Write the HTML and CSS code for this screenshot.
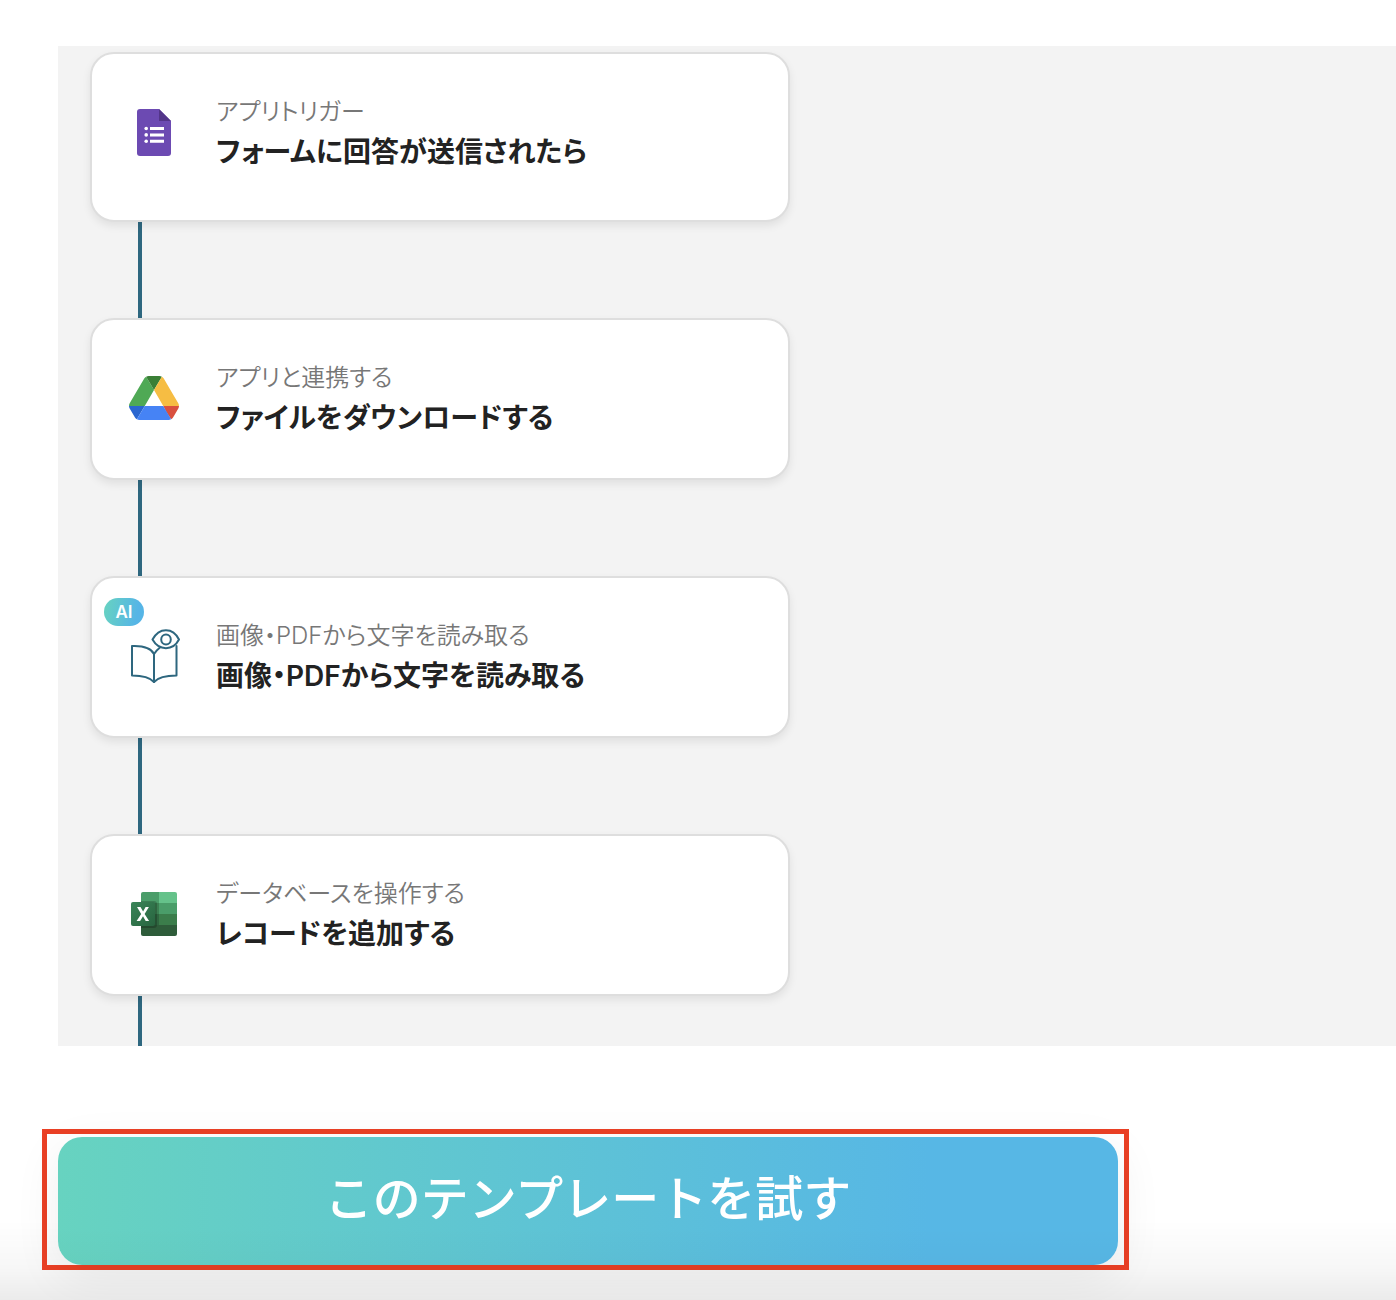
FILE: index.html
```html
<!DOCTYPE html>
<html lang="ja">
<head>
  <meta charset="UTF-8">
  <meta name="viewport" content="width=device-width, initial-scale=1.0">
  <title>テンプレート</title>
  <link rel="stylesheet" href="styles.css">
</head>
<body>
  <main class="page">
    <section class="flow">
      <article class="card card-trigger">
        <div class="card-icon">
          <svg width="34" height="47" viewBox="0 0 34 47" aria-hidden="true">
            <path fill="#6c4ab2" d="M3 0h19l12 12v32a3 3 0 0 1-3 3H3a3 3 0 0 1-3-3V3a3 3 0 0 1 3-3z"/>
            <path fill="#533589" d="M22 0l12 12H22z"/>
            <path fill="#fff" d="M13 18h14v3H13zM13 24.4h14v3H13zM13 30.8h14v3H13z"/>
            <circle fill="#fff" cx="9.2" cy="19.5" r="1.8"/>
            <circle fill="#fff" cx="9.2" cy="25.9" r="1.8"/>
            <circle fill="#fff" cx="9.2" cy="32.3" r="1.8"/>
          </svg>
        </div>
        <div class="card-text">
          <p class="card-type">アプリトリガー</p>
          <h2 class="card-title">フォームに回答が送信されたら</h2>
        </div>
      </article>
      <div class="connector"></div>

      <article class="card">
        <div class="card-icon">
          <svg width="50" height="44" viewBox="0 0 87.3 78" preserveAspectRatio="none" aria-hidden="true">
            <path fill="#2a66d0" d="M6.6 66.85l3.85 6.65c.8 1.4 1.95 2.5 3.3 3.3L27.5 53H0c0 1.55.4 3.1 1.2 4.5z"/>
            <path fill="#4fa955" d="M43.65 25L29.9 1.2c-1.35.8-2.5 1.9-3.3 3.3L1.2 48.5C.4 49.9 0 51.45 0 53h27.5z"/>
            <path fill="#d9503f" d="M73.55 76.8c1.35-.8 2.5-1.9 3.3-3.3l1.6-2.75 7.65-13.25c.8-1.4 1.2-2.95 1.2-4.5H59.8l5.85 11.5z"/>
            <path fill="#3a7f36" d="M43.65 25L57.4 1.2C56.05.4 54.5 0 52.9 0H34.4c-1.6 0-3.15.45-4.5 1.2z"/>
            <path fill="#4683f5" d="M59.8 53H27.5L13.75 76.8c1.35.8 2.9 1.2 4.5 1.2h50.8c1.6 0 3.15-.45 4.5-1.2z"/>
            <path fill="#f6bd43" d="M73.4 26.5L60.7 4.5c-.8-1.4-1.95-2.5-3.3-3.3L43.65 25 59.8 53h27.45c0-1.55-.4-3.1-1.2-4.5z"/>
          </svg>
        </div>
        <div class="card-text">
          <p class="card-type">アプリと連携する</p>
          <h2 class="card-title">ファイルをダウンロードする</h2>
        </div>
      </article>
      <div class="connector"></div>

      <article class="card">
        <span class="badge">AI</span>
        <div class="card-icon">
          <svg width="52" height="56" viewBox="0 0 52 56" fill="none" stroke="#2e677f" stroke-width="2" stroke-linejoin="round" stroke-linecap="round" aria-hidden="true">
            <path d="M26 26C23 20 16 17.500 4 18V47.500C16 47.500 22 49.500 26 54C30 49.500 36 47.500 48.500 47.500V18"/>
            <path d="M26 54V26C27.500 23.500 29.500 21.500 32 19.500"/>
            <path d="M24.500 11.500C31 -1 45 -1 51 11.500C45 23 31 23 24.500 11.500z"/>
            <ellipse cx="38" cy="11.500" rx="4.800" ry="5"/>
          </svg>
        </div>
        <div class="card-text">
          <p class="card-type">画像・PDFから文字を読み取る</p>
          <h2 class="card-title">画像・PDFから文字を読み取る</h2>
        </div>
      </article>
      <div class="connector"></div>

      <article class="card">
        <div class="card-icon">
          <svg width="48" height="46" viewBox="0 0 48 46" aria-hidden="true">
            <defs>
              <clipPath id="sheet"><rect x="11" y="1" width="36" height="44" rx="2"/></clipPath>
              <linearGradient id="tile" x1="0" y1="0" x2="1" y2="1">
                <stop offset="0" stop-color="#3a8558"/>
                <stop offset="1" stop-color="#28643f"/>
              </linearGradient>
            </defs>
            <g clip-path="url(#sheet)">
              <path fill="#4a9d69" d="M11 1h18v11H11z"/>
              <path fill="#65c28a" d="M29 1h18v11H29z"/>
              <path fill="#3b8052" d="M11 12h18v11H11z"/>
              <path fill="#4a9d69" d="M29 12h18v11H29z"/>
              <path fill="#2f6640" d="M11 23h18v11H11z"/>
              <path fill="#3b7d4b" d="M29 23h18v11H29z"/>
              <path fill="#2e5c3a" d="M11 34h36v11H11z"/>
              <path fill="#000" fill-opacity=".2" d="M11 10h13q3 0 3 3v21q0 3-3 3H11z"/>
            </g>
            <rect fill="url(#tile)" x="1" y="11" width="24" height="24" rx="2"/>
            <path fill="#fff" d="M6.600 30l4.600-7-4.200-7h3.500l2.600 4.600 2.500-4.600H18.900l-4.300 7 4.500 7H15.700l-2.700-4.800L10.100 30z"/>
          </svg>
        </div>
        <div class="card-text">
          <p class="card-type">データベースを操作する</p>
          <h2 class="card-title">レコードを追加する</h2>
        </div>
      </article>
      <div class="connector connector-last"></div>
    </section>

    <div class="highlight">
      <button type="button" class="btn">このテンプレートを試す</button>
    </div>
  </main>
  <div class="fade"></div>
</body>
</html>
```

FILE: styles.css
```css
* {
  box-sizing: border-box;
}
body {
  margin: 0;
  background: #fff;
  color: #222;
  font-family: Inter, "Noto Sans CJK JP", sans-serif;
}
.page {
  padding: 46px 0 30px;
}
.flow {
  margin-left: 58px;
  padding: 6px 32px 0;
  background: #f3f3f3;
}
.card {
  position: relative;
  display: flex;
  max-width: 700px;
  min-height: 162px;
  padding: 38px 36px;
  background: #fff;
  border: 2px solid #dedede;
  border-radius: 24px;
  box-shadow: 0 4px 8px rgba(0, 0, 0, 0.08);
}
.card-trigger {
  min-height: 170px;
}
.card-icon {
  display: flex;
  align-items: center;
  justify-content: center;
  width: 52px;
  height: 80px;
  margin-right: 36px;
}
.card-icon svg {
  display: block;
}
.card-type,
.card-title {
  margin: 0;
  line-height: 40px;
  font-feature-settings: "palt";
}
.card-type {
  font-size: 24px;
  font-weight: 350;
  color: #777;
}
.card-title {
  font-size: 28px;
  font-weight: 600;
}
.badge {
  position: absolute;
  top: 20px;
  left: 12px;
  width: 40px;
  border-radius: 14px;
  background: linear-gradient(100deg, #67d3c0, #56b5e6 80%);
  color: #fff;
  font-size: 17px;
  font-weight: 600;
  line-height: 28px;
  text-align: center;
}
.connector {
  width: 4px;
  height: 96px;
  margin-left: 48px;
  background: #2e677f;
}
.connector-last {
  height: 50px;
}
.highlight {
  position: relative;
  z-index: 1;
  max-width: 1087px;
  margin: 83px 0 0 42px;
  padding: 3px 6px 0 11px;
  border: 5px solid #ea4025;
}
.btn {
  display: block;
  width: 100%;
  padding: 26px 28px 30px;
  border: none;
  border-radius: 24px;
  background:
    linear-gradient(rgba(0, 0, 0, 0) 70%, rgba(0, 0, 0, 0.02)),
    linear-gradient(92deg, #67d3c0, #57b7e5 82%);
  box-shadow: 0 12px 48px rgba(0, 0, 0, 0.07);
  color: #fff;
  font-family: inherit;
  font-size: 48px;
  font-weight: 500;
  line-height: 72px;
  cursor: pointer;
}
.fade {
  position: fixed;
  right: 0;
  bottom: 0;
  left: 0;
  height: 80px;
  background: linear-gradient(rgba(0, 0, 0, 0), rgba(0, 0, 0, 0.03) 60%, rgba(0, 0, 0, 0.08));
  pointer-events: none;
}
```
